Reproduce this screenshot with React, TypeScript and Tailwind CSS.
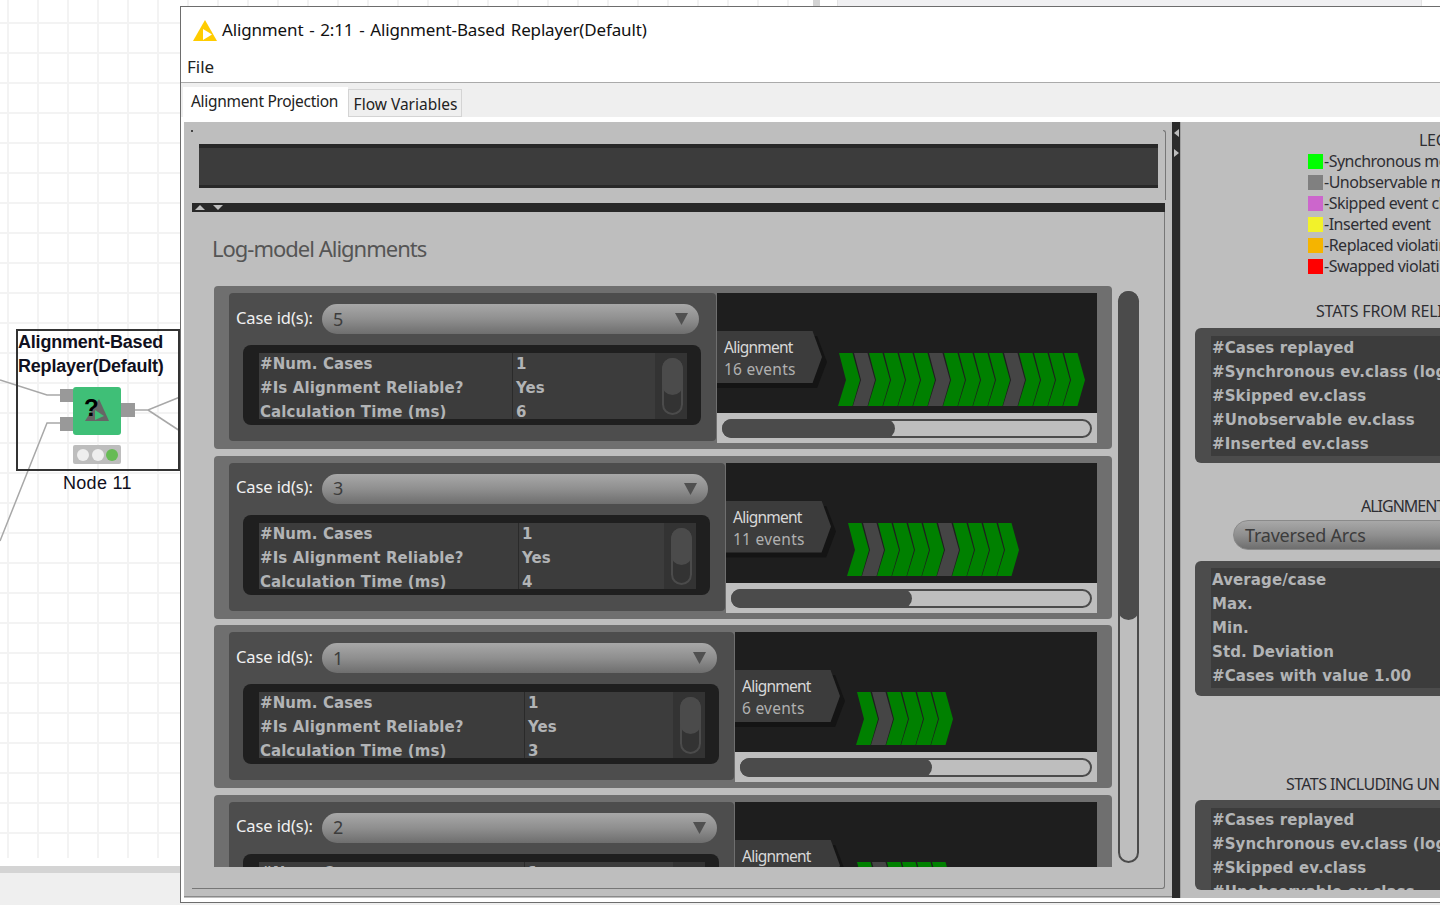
import React from 'react';

const ui = "font-['Noto_Sans',sans-serif]";
const bold = "font-['DejaVu_Sans',sans-serif] font-bold text-[15px] leading-[24px] tracking-[0.1px] text-[#b2b4b6]";

const pattern = ['g', 'x', 'g', 'g', 'g', 'g', 'x', 'g', 'g', 'g', 'g', 'x', 'g', 'g', 'g', 'g'];

const cases = [
  { id: '5', events: 16, time: '6', leftW: 'w-[487px]', colW: 'w-[254px]', thumbW: 'w-[173px]' },
  { id: '3', events: 11, time: '4', leftW: 'w-[496px]', colW: 'w-[260px]', thumbW: 'w-[181px]' },
  { id: '1', events: 6, time: '3', leftW: 'w-[505px]', colW: 'w-[266px]', thumbW: 'w-[192px]' },
  { id: '2', events: 6, time: '3', leftW: 'w-[505px]', colW: 'w-[266px]', thumbW: 'w-[192px]' },
];

const legend = [
  { color: 'bg-[#00ff00]', label: '-Synchronous move' },
  { color: 'bg-[#808080]', label: '-Unobservable move' },
  { color: 'bg-[#cc66cc]', label: '-Skipped event class' },
  { color: 'bg-[#f2f22a]', label: '-Inserted event' },
  { color: 'bg-[#f5b400]', label: '-Replaced violating' },
  { color: 'bg-[#ff0000]', label: '-Swapped violating' },
];

const Chevrons: React.FC<{ count: number }> = ({ count }) => (
  <svg width={count * 15 + 10} height={53} viewBox={`-1 0 ${count * 15 + 10} 53`} className="block shrink-0">
    {pattern.slice(0, count).map((kind, i) => {
      const x = i * 15;
      return (
        <polygon
          key={i}
          fill={kind === 'g' ? '#008000' : '#454545'}
          points={`${x},0 ${x + 13.5},0 ${x + 21},27 ${x + 13.5},53 ${x - 1},53 ${x + 7},27`}
        />
      );
    })}
  </svg>
);

const CaseRow: React.FC<{ item: (typeof cases)[number] }> = ({ item }) => (
  <div className="flex h-[163px] w-[898px] shrink-0 rounded-[4px] bg-[#6f6f6f] px-[15px] pt-[7px]">
    <div className={`${item.leftW} h-[148px] shrink-0 rounded-[4px] bg-[#4d4d4d] pl-[7px] pr-[15px] pt-[11px]`}>
      <div className={`flex h-[30px] items-center pr-[2px] ${ui}`}>
        <span className="-mt-[2px] w-[86px] shrink-0 text-[16.5px] tracking-[-0.1px] text-[#f0f0f0]">Case id(s):</span>
        <div className="flex h-[30px] flex-1 items-center justify-between rounded-full bg-[linear-gradient(#a8a8a8,#8f8f8f_50%,#6e6e6e)] pl-[11px] pr-[11px]">
          <span className="text-[18px] text-[#3c3c3c]">{item.id}</span>
          <svg width="13" height="12" viewBox="0 0 13 12"><polygon points="0,0 13,0 6.5,12" fill="#505050" /></svg>
        </div>
      </div>
      <div className="ml-[7px] mt-[11px] h-[80px] rounded-[8px] bg-[#1f1f1f] pl-[16px] pr-[14px] pt-[8px]">
        <div className="flex h-[66px] overflow-hidden bg-[#3c3c3c]">
          <div className={`${item.colW} -mt-[1px] shrink-0 whitespace-nowrap border-r border-[#2a2a2a] pl-[1px] ${bold}`}>
            <div>#Num. Cases</div>
            <div>#Is Alignment Reliable?</div>
            <div>Calculation Time (ms)</div>
          </div>
          <div className={`-mt-[1px] flex-1 pl-[3px] ${bold}`}>
            <div>1</div>
            <div>Yes</div>
            <div>{item.time}</div>
          </div>
          <div className="w-[32px] shrink-0 bg-[#333333] pl-[7px] pt-[5px]">
            <div className="h-[57px] w-[21px] rounded-full border-2 border-[#4b4b4b]">
              <div className="-m-[2px] h-[37px] w-[21px] rounded-full bg-[#4b4b4b]" />
            </div>
          </div>
        </div>
      </div>
    </div>
    <div className="ml-[1px] flex h-[150px] flex-1 flex-col">
      <div className={`flex h-[120px] items-start bg-[#1e1e1e] pt-[38px] ${ui}`}>
        <div className="relative h-[52px] w-[105px] shrink-0 text-[15.5px] leading-[22px]">
          <div className="absolute left-0 top-[5px] h-[52px] w-[110px] bg-[#141414] [clip-path:polygon(0_0,91%_0,100%_50%,91%_100%,0_100%)]" />
          <div className="absolute left-0 top-0 h-[52px] w-[105px] bg-[#3c3c3c] pl-[7px] pt-[5px] [clip-path:polygon(0_0,91%_0,100%_50%,91%_100%,0_100%)]">
            <div className="tracking-[-0.75px] text-[#d8d8d8]">Alignment</div>
            <div className="tracking-[0.25px] text-[#b0b0b0]">{item.events} events</div>
          </div>
        </div>
        <div className="ml-[16px] mt-[22px]">
          <Chevrons count={item.events} />
        </div>
      </div>
      <div className="h-[30px] bg-[#bebebe] pl-[5px] pr-[5px] pt-[6px]">
        <div className="h-[19px] rounded-full border-2 border-[#4b4b4b]">
          <div className={`-m-[2px] h-[19px] ${item.thumbW} rounded-full bg-[#4b4b4b]`} />
        </div>
      </div>
    </div>
  </div>
);

const StatsBox: React.FC<{ rows: string[]; height: string; textTop: string }> = ({ rows, height, textTop }) => (
  <div className={`ml-[14px] ${height} w-[400px] shrink-0 overflow-hidden rounded-[6px] bg-[#4c4c4c] pl-[16px] pt-[8px]`}>
    <div className={`${textTop} min-h-[120px] whitespace-nowrap bg-[#3c3c3c] pl-[1px] ${bold}`}>
      {rows.map((row) => (
        <div key={row}>{row}</div>
      ))}
    </div>
  </div>
);

const statRows = ['#Cases replayed', '#Synchronous ev.class (log+model)', '#Skipped ev.class', '#Unobservable ev.class', '#Inserted ev.class'];
const alignRows = ['Average/case', 'Max.', 'Min.', 'Std. Deviation', '#Cases with value 1.00'];

const NodeOnCanvas: React.FC = () => (
  <>
    <svg className="absolute left-0 top-[320px]" width="182" height="240" viewBox="0 320 182 240" fill="none" stroke="#a8a8a8" strokeWidth="1.5">
      <polyline points="0,380 47,395 60,395" />
      <polyline points="0,541 47,423 60,423" />
      <polyline points="135,410 148,410 180,397" />
      <polyline points="148,410 180,431" />
    </svg>
    <div className="absolute left-[16px] top-[329px] h-[142px] w-[164px] border-2 border-[#333333]" />
    <div className="absolute left-[18px] top-[331px] whitespace-nowrap font-['Liberation_Sans',sans-serif] text-[18px] font-bold leading-[23.5px] tracking-[-0.2px] text-[#101020]">
      <div>Alignment-Based</div>
      <div>Replayer(Default)</div>
    </div>
    <div className="absolute left-[60px] top-[389px] h-[13px] w-[13px] bg-[#999999]" />
    <div className="absolute left-[60px] top-[417px] h-[14px] w-[13px] bg-[#999999]" />
    <div className="absolute left-[121px] top-[403px] h-[14px] w-[14px] bg-[#999999]" />
    <div className="absolute left-[73px] top-[387px] h-[48px] w-[48px] rounded-[3px] bg-[#3fbf77]">
      <svg width="48" height="48" viewBox="0 0 48 48">
        <polygon points="12,34 36,34 26,12" fill="#666666" />
        <polygon points="22,23 31,29 22,33" fill="#3fbf77" />
        <text x="11" y="29" fontFamily="Liberation Sans" fontWeight="700" fontSize="24" fill="#000000">?</text>
      </svg>
    </div>
    <div className="absolute left-[73px] top-[445px] flex h-[19px] w-[48px] items-center gap-[2.5px] rounded-[2px] bg-[#bdbdbd] pl-[4px]">
      <div className="h-[12px] w-[12px] rounded-full bg-[#eeeeee]" />
      <div className="h-[12px] w-[12px] rounded-full bg-[#eeeeee]" />
      <div className="h-[12px] w-[12px] rounded-full bg-[#66bb55]" />
    </div>
    <div className="absolute left-[63px] top-[472px] whitespace-nowrap font-['Liberation_Sans',sans-serif] text-[18px] leading-[22px] tracking-[0.3px] text-[#101020]">Node 11</div>
  </>
);

const App: React.FC = () => {
  return (
    <div className="relative h-[905px] w-[1440px] overflow-hidden bg-[#efefef]">
      <div className="flex h-[866px] bg-white">
        <div className="h-[858px] w-[813px] bg-[linear-gradient(#f3f3f3_2px,transparent_2px),linear-gradient(90deg,#f3f3f3_2px,transparent_2px)] bg-[size:30px_30px] bg-[position:7px_22px]" />
        <div className="h-[6px] w-[7px] bg-[#d4d4d4]" />
        <div className="ml-[17px] h-[6px] w-[585px] border-x border-[#e4e4e4] bg-[#f0f0f2]" />
      </div>
      <div className="h-[7px] bg-[#d4d4d4]" />
      <NodeOnCanvas />

      <div className="absolute left-[180px] top-[6px] flex h-[897px] w-[1262px] flex-col border border-[#6d6d6d] bg-white">
        <div className={`flex h-[44px] shrink-0 items-center pl-[12px] pt-[2px] ${ui}`}>
          <svg width="24" height="21" viewBox="0 0 24 21" className="shrink-0">
            <polygon points="12,0 24,21 0,21" fill="#ffcc00" />
            <polygon points="10,9 19,14.5 10,20" fill="#ffffff" />
          </svg>
          <span className="ml-[5px] whitespace-nowrap text-[17px] tracking-[-0.15px] text-[#111111] [word-spacing:1.5px]">Alignment - 2:11 - Alignment-Based Replayer(Default)</span>
        </div>
        <div className={`flex h-[32px] shrink-0 items-center border-b border-[#aaaaaa] pl-[6px] pt-[1px] text-[17px] text-[#222222] ${ui}`}>File</div>
        <div className={`flex h-[39px] shrink-0 items-start border-b-[5px] border-white bg-[#efefef] pl-[2px] pt-[4px] ${ui}`}>
          <div className="flex h-[35px] w-[165px] items-center justify-center bg-white pb-[6px] pr-[2px] text-[15.5px] tracking-[-0.3px] text-[#222222]">Alignment Projection</div>
          <div className="mt-[2px] flex h-[28px] w-[114px] items-center justify-center border border-[#d4d4d4] pl-[1px] pt-[3px] text-[15.5px] tracking-[0px] text-[#222222]">Flow Variables</div>
        </div>
        <div className="min-h-0 flex-1 bg-white pb-[4px] pl-[3px]">
          <div className="flex h-full bg-[#bebebe]">
            <div className="relative w-[988px] shrink-0 pt-[22px]">
              <div className="absolute left-[7px] top-[8px] h-[2px] w-[2px] bg-[#444444]" />
              <div className="absolute left-[979px] top-[8px] h-[70px] w-[3px] rounded-tr-[3px] border-r border-t border-[#777777]" />
              <div className="ml-[15px] h-[44px] w-[959px] border-b-[3px] border-t-[4px] border-[#282828] bg-[#3c3c3c]" />
              <div className="ml-[8px] mt-[15px] flex h-[9px] w-[973px] items-center gap-[8px] bg-[#282828] pl-[3px]">
                <svg width="10" height="5" viewBox="0 0 10 5"><polygon points="0,5 10,5 5,0" fill="#bebebe" /></svg>
                <svg width="10" height="5" viewBox="0 0 10 5"><polygon points="0,0 10,0 5,5" fill="#bebebe" /></svg>
              </div>
              <div className="ml-[8px] h-[677px] w-[973px] rounded-br-[3px] border-b border-r border-[#777777]">
                <div className={`pl-[20px] pt-[20px] text-[22px] leading-[32px] tracking-[-1px] text-[#555555] ${ui}`}>Log-model Alignments</div>
                <div className="mt-[22px] flex pl-[22px]">
                  <div className="flex h-[581px] w-[898px] shrink-0 flex-col gap-[6.5px] overflow-hidden">
                    {cases.map((item, i) => (
                      <CaseRow key={i} item={item} />
                    ))}
                  </div>
                  <div className="ml-[6px] mt-[5px] h-[572px] w-[21px] shrink-0 rounded-full border-2 border-[#4b4b4b]">
                    <div className="-m-[2px] h-[329px] w-[21px] rounded-full bg-[#4b4b4b]" />
                  </div>
                </div>
              </div>
              <div className="absolute bottom-[1px] left-0 h-px w-[988px] bg-[#8a8a8a]" />
            </div>

            <div className="flex w-[8px] shrink-0 flex-col items-center gap-[12px] bg-[#2b2b2b] pt-[7px]">
              <svg width="5" height="8" viewBox="0 0 5 8"><polygon points="5,0 5,8 0,4" fill="#bebebe" /></svg>
              <svg width="5" height="8" viewBox="0 0 5 8"><polygon points="0,0 0,8 5,4" fill="#bebebe" /></svg>
            </div>

            <div className={`flex min-w-0 flex-1 flex-col overflow-hidden border-l border-[#a0a0a0] ${ui}`}>
              <div className="mt-[8px] h-[20px] whitespace-nowrap pl-[238px] text-[16px] leading-[20px] tracking-[-0.3px] text-[#2e2e33]">LEGEND</div>
              <div className="mt-[4px] flex flex-col pl-[127px]">
                {legend.map((row) => (
                  <div key={row.label} className="flex h-[21px] items-start">
                    <div className={`h-[15px] w-[15px] shrink-0 ${row.color}`} />
                    <span className="-mt-[3px] ml-[1px] whitespace-nowrap text-[16px] leading-[20px] tracking-[-0.5px] text-[#2e2e33]">{row.label}</span>
                  </div>
                ))}
              </div>
              <div className="mt-[21px] h-[20px] whitespace-nowrap pl-[135px] text-[16px] leading-[20px] tracking-[-0.2px] text-[#2e2e33]">STATS FROM RELIABLE ALIGNMENTS</div>
              <div className="mt-[7px]"><StatsBox rows={statRows} height="h-[135px]" textTop="mt-0" /></div>
              <div className="mt-[33px] h-[20px] whitespace-nowrap pl-[180px] text-[16px] leading-[20px] tracking-[-1px] text-[#2e2e33]">ALIGNMENT STATISTICS</div>
              <div className="ml-[52px] mt-[4px] flex h-[30px] w-[300px] shrink-0 items-center rounded-full border border-[#8a8a8a] bg-[linear-gradient(#a8a8a8,#8f8f8f_50%,#6e6e6e)] pl-[11px] text-[18px] tracking-[-0.2px] text-[#3c3c3c]">Traversed Arcs</div>
              <div className="mt-[11px]"><StatsBox rows={alignRows} height="h-[135px]" textTop="-mt-[1px]" /></div>
              <div className="mt-[78px] h-[20px] whitespace-nowrap pl-[105px] text-[16px] leading-[20px] tracking-[-0.6px] text-[#2e2e33]">STATS INCLUDING UNRELIABLE ALIGNMENTS</div>
              <div className="mt-[6px]"><StatsBox rows={statRows} height="h-[90px]" textTop="mt-0" /></div>
            </div>
          </div>
        </div>
      </div>
    </div>
  );
};

export default App;
